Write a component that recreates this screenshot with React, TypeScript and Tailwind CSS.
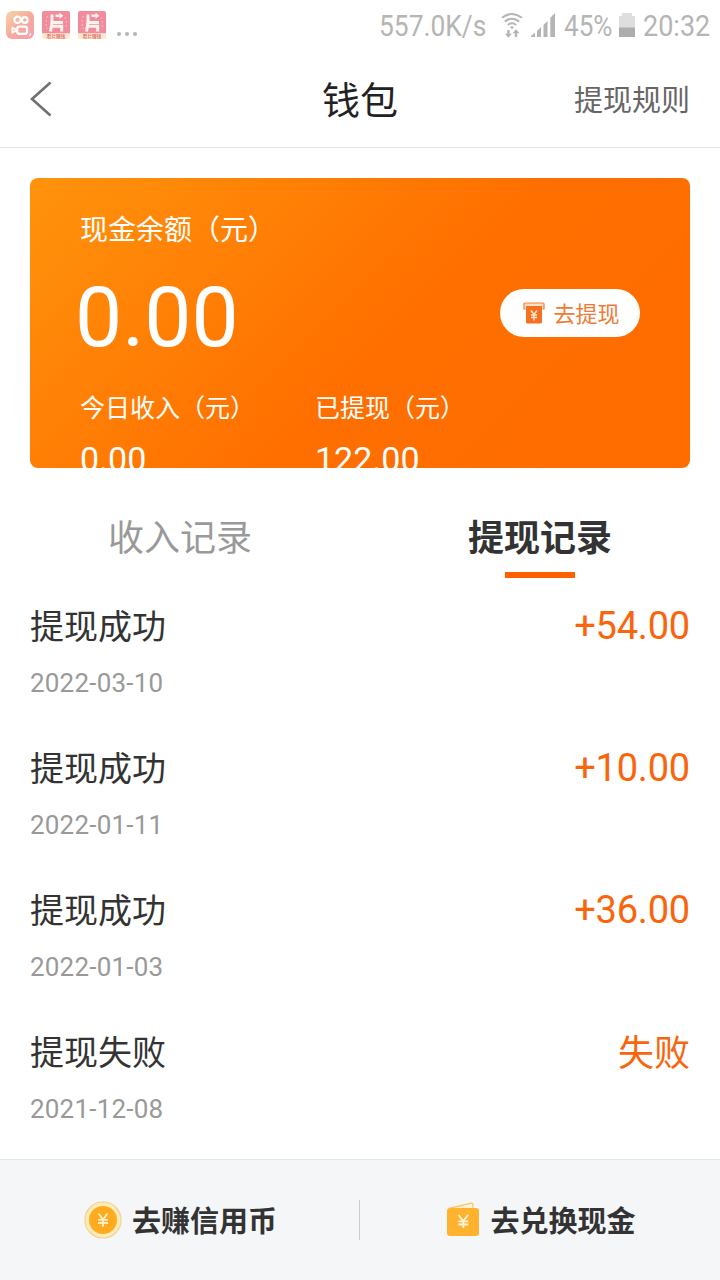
import { ReactNode } from "react";

const records = [
  { title: "提现成功", date: "2022-03-10", amount: "+54.00" },
  { title: "提现成功", date: "2022-01-11", amount: "+10.00" },
  { title: "提现成功", date: "2022-01-03", amount: "+36.00" },
  { title: "提现失败", date: "2021-12-08", amount: "失败" },
];

const KuaishouIcon = () => (
  <svg viewBox="0 0 28 28" className="w-7 h-7">
    <defs>
      <linearGradient id="ks" x1="0" y1="0" x2="1" y2="1">
        <stop offset="0" stopColor="#f8d6a4" />
        <stop offset="0.5" stopColor="#f6ab9c" />
        <stop offset="1" stopColor="#f49fb4" />
      </linearGradient>
    </defs>
    <rect width="28" height="28" rx="6" fill="url(#ks)" />
    <g fill="none" stroke="#fff" strokeWidth="2.2">
      <circle cx="11.6" cy="8.8" r="3.2" />
      <circle cx="18.8" cy="9" r="2.8" />
      <rect x="11.2" y="15.6" width="9.8" height="7.2" rx="2" />
      <path d="M11 19.2 6.3 16.6v5.2z" strokeWidth="1.8" strokeLinejoin="round" />
    </g>
    <path d="m23.4 25 1.4-2.6" stroke="#fff" strokeWidth="1.2" />
  </svg>
);

const FilmIcon = () => (
  <svg viewBox="0 0 28 28" className="w-7 h-7">
    <path d="M0 2a2 2 0 0 1 2-2h24a2 2 0 0 1 2 2v20.5H0z" fill="#f28b9b" />
    <path d="M0 22.5h28V26a2 2 0 0 1-2 2H2a2 2 0 0 1-2-2z" fill="#fbe9cc" />
    <path d="M10 3.5v8M9 11.5h12M10.5 15.3h9.2v5.2M10 11l-1.5 9.5" fill="none" stroke="#fff3ee" strokeWidth="3" />
    <path d="M13.5 3.5h4V1.8l4 3-4 3V6h-4z" fill="#fff3ee" />
    <path d="M5.5 5c-2 4-2 9 0 13M23 6c2 4 2 9 0 12" fill="none" stroke="#f8bfc6" strokeDasharray="2 2" />
    <text x="14" y="27" fontSize="4.6" textAnchor="middle" fontWeight="700" fill="#e2796f">看片赚钱</text>
  </svg>
);

const WifiIcon = () => (
  <svg viewBox="0 0 22 25" className="w-[22px] h-[25px]">
    <g fill="none" stroke="#b5b5b5" strokeWidth="2">
      <path d="M1 4.8Q11-2.8 21 4.8" />
      <path d="M3.8 8.6Q11 2.8 18.2 8.6" />
      <path d="M6.8 12Q11 8.6 15.2 12" />
    </g>
    <path d="M9 14q2-1.5 4 0l-2 2.2z" fill="#b5b5b5" />
    <path d="M6.2 17h2.4v3.7H11l-3.6 4-3.6-4h2.4zM13.8 24v-3.7h-2.4l3.6-4 3.6 4h-2.4V24z" fill="#b5b5b5" />
  </svg>
);

const SignalIcon = () => (
  <svg viewBox="0 0 24 24" className="w-6 h-6">
    <path d="M0 24v-1l4-3.5V24zM6 24v-6l4-4v10zM12.5 24V12l4-4v16zM19.3 24V4.8L24 0v24z" fill="#b5b5b5" />
  </svg>
);

const BatteryIcon = () => (
  <svg viewBox="0 0 16 24" className="w-4 h-6">
    <path d="M0 3h3V0h10v3h3v21H0z" fill="#dedede" />
    <path d="M0 14.5h16V24H0z" fill="#adadad" />
  </svg>
);

const AtmIcon = () => (
  <svg viewBox="0 0 24 24" className="w-6 h-6">
    <path d="M3.5 8H2V3a1 1 0 0 1 1-1h18a1 1 0 0 1 1 1v5h-1.5" fill="#ffe0cc" stroke="#f57f35" strokeWidth="1.2" />
    <path d="M4 5h16v16a1.5 1.5 0 0 1-1.5 1.5h-13A1.5 1.5 0 0 1 4 21z" fill="#f4711f" />
    <path d="m9 9.5 3 4 3-4M12 13.5v6M9 14h6M9 16.5h6" fill="none" stroke="#ffe3d0" strokeWidth="1.5" />
  </svg>
);

const CoinIcon = () => (
  <svg viewBox="0 0 38 38" className="w-[38px] h-[38px]">
    <circle cx="19" cy="19" r="18" fill="#ffecb8" stroke="#f6cf8e" strokeWidth="1.2" />
    <circle cx="19" cy="19" r="14" fill="#ffab1f" />
    <path d="m14.5 12.5 4.5 6 4.5-6M19 18.5v7M14 18.8h10M14 22h10" fill="none" stroke="#fff0c9" strokeWidth="1.8" />
  </svg>
);

const WalletIcon = () => (
  <svg viewBox="0 0 34 36" className="w-[34px] h-9">
    <path d="M3 6.5 25 1.2q2-.4 2 1.6v4" fill="#fff1d6" stroke="#ffc466" strokeWidth="1.3" />
    <rect x="1" y="6" width="32" height="28" rx="3" fill="#ffb22d" />
    <path d="m12.500 13 4.800 6 4.800-6M17.300 19v7M12.300 19.300h10M12.300 22.500h10" fill="none" stroke="#fff4dc" strokeWidth="1.8" />
  </svg>
);

const StatusBar = () => (
  <div className="flex h-[50px] items-center justify-between pl-1.5 pr-2.5 text-[30px] leading-none text-[#b5b5b5]">
    <div className="flex items-center">
      <KuaishouIcon />
      <div className="ml-2 flex gap-2">
        <FilmIcon />
        <FilmIcon />
      </div>
      <div className="ml-[11px] mt-[18px] flex gap-1">
        <i className="size-1 rounded-full bg-[#b5b5b5]" />
        <i className="size-1 rounded-full bg-[#b5b5b5]" />
        <i className="size-1 rounded-full bg-[#b5b5b5]" />
      </div>
    </div>
    <div className="flex items-center">
      <span className="mt-0.5 w-[108px] origin-left scale-x-[0.88] whitespace-nowrap">557.0K/s</span>
      <div className="ml-[14px]"><WifiIcon /></div>
      <div className="ml-2"><SignalIcon /></div>
      <span className="mt-0.5 ml-[9px] w-[50px] origin-left scale-x-[0.87] whitespace-nowrap">45%</span>
      <div className="ml-[5px]"><BatteryIcon /></div>
      <span className="mt-0.5 ml-2 w-[67px] origin-left scale-x-[0.9] whitespace-nowrap">20:32</span>
    </div>
  </div>
);

const Header = () => (
  <header className="grid h-[98px] grid-cols-3 items-center border-b border-[#e4e4e4] px-[30px]">
    <button>
      <svg viewBox="0 0 22 36" className="w-[22px] h-9">
        <path d="M20.5 1.5 2 18l18.500 16.500" fill="none" stroke="#707070" strokeWidth="2.6" />
      </svg>
    </button>
    <h1 className="pt-1 text-center text-[38px] leading-none text-[#222]">钱包</h1>
    <span className="pt-1.5 text-right text-[29px] leading-none text-[#666]">提现规则</span>
  </header>
);

const BalanceCard = () => (
  <section className="mx-[30px] mt-[30px] h-[290px] overflow-hidden rounded-lg bg-[linear-gradient(135deg,#ff930c_0%,#ff6f00_55%,#ff6c00_100%)] px-[50px] pt-[37px] text-white">
    <p className="text-[28px] leading-8">现金余额（元）</p>
    <div className="mt-[18px] flex h-24 items-center justify-between">
      <span className="-ml-[5px] mt-2.5 text-[84px] leading-none">0.00</span>
      <button className="flex h-12 w-[140px] items-center justify-center gap-[7px] rounded-full bg-white pl-0.5 text-[22px] text-[#f07a35]">
        <AtmIcon />
        <span className="mt-0.5">去提现</span>
      </button>
    </div>
    <div className="mt-8 grid grid-cols-[235px_1fr]">
      <div>
        <p className="text-[25px] leading-8">今日收入（元）</p>
        <p className="mt-3.5 text-[34px] leading-10">0.00</p>
      </div>
      <div>
        <p className="text-[25px] leading-8">已提现（元）</p>
        <p className="mt-3.5 text-[34px] leading-10">122.00</p>
      </div>
    </div>
  </section>
);

const Tabs = () => (
  <nav className="mt-[50px] grid grid-cols-2 text-center text-[36px] leading-[42px]">
    <div className="text-[#999]">收入记录</div>
    <div className="flex flex-col items-center font-bold text-[#333]">
      提现记录
      <div className="mt-3 h-1.5 w-[70px] bg-[#ff6000]" />
    </div>
  </nav>
);

const FooterButton = ({ icon, label }: { icon: ReactNode; label: string }) => (
  <button className="flex items-center justify-center gap-2.5 pl-0.5 text-[29px] font-bold leading-none text-[#333]">
    {icon}
    <span className="mt-1">{label}</span>
  </button>
);

export default function App() {
  return (
    <div
      lang="zh-CN"
      className="flex h-[1280px] w-[720px] flex-col overflow-hidden bg-white font-[Roboto,'Noto_Sans_CJK_SC',sans-serif]"
    >
      <StatusBar />
      <Header />
      <BalanceCard />
      <Tabs />
      <ul className="flex-1">
        {records.map((record) => (
          <li key={record.date} className="flex h-[142px] justify-between px-[30px] pt-7">
            <div>
              <p className="mt-px text-[34px] leading-10 text-[#333]">{record.title}</p>
              <p className="mt-5 text-[26px] leading-8 tracking-[0.2px] text-[#999]">{record.date}</p>
            </div>
            <span className={record.amount === "失败" ? "mt-0.5 text-[36px] leading-10 text-[#f9650c]" : "text-[38px] leading-10 tracking-[-0.2px] text-[#f9650c]"}>
              {record.amount}
            </span>
          </li>
        ))}
      </ul>
      <footer className="grid h-[121px] shrink-0 grid-cols-[359px_1px_1fr] items-center border-t border-[#e6e6e6] bg-[#f5f6f8]">
        <FooterButton icon={<CoinIcon />} label="去赚信用币" />
        <div className="h-10 bg-[#ccc]" />
        <FooterButton icon={<WalletIcon />} label="去兑换现金" />
      </footer>
    </div>
  );
}
